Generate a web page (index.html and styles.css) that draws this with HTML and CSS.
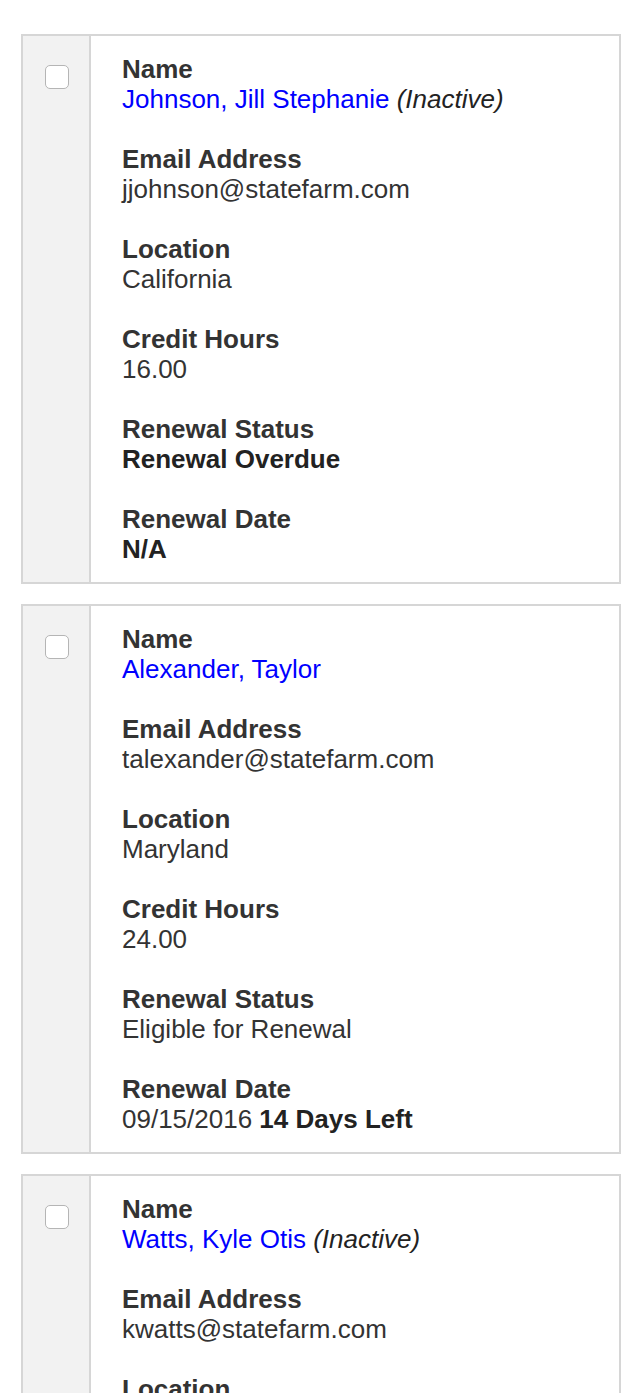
FILE: index.html
```html
<!DOCTYPE html>
<html>
<head>
<meta charset="utf-8">
<link rel="stylesheet" href="styles.css">
</head>
<body>
<div class="list">
  <div class="card">
    <div class="side"><span class="check"></span></div>
    <div class="fields">
      <div class="field"><div class="label">Name</div><div class="value"><a class="link">Johnson, Jill Stephanie</a> <em>(Inactive)</em></div></div>
      <div class="field"><div class="label">Email Address</div><div class="value">jjohnson@statefarm.com</div></div>
      <div class="field"><div class="label">Location</div><div class="value">California</div></div>
      <div class="field"><div class="label">Credit Hours</div><div class="value">16.00</div></div>
      <div class="field"><div class="label">Renewal Status</div><div class="value"><strong>Renewal Overdue</strong></div></div>
      <div class="field"><div class="label">Renewal Date</div><div class="value"><strong>N/A</strong></div></div>
    </div>
  </div>
  <div class="card">
    <div class="side"><span class="check"></span></div>
    <div class="fields">
      <div class="field"><div class="label">Name</div><div class="value"><a class="link">Alexander, Taylor</a></div></div>
      <div class="field"><div class="label">Email Address</div><div class="value">talexander@statefarm.com</div></div>
      <div class="field"><div class="label">Location</div><div class="value">Maryland</div></div>
      <div class="field"><div class="label">Credit Hours</div><div class="value">24.00</div></div>
      <div class="field"><div class="label">Renewal Status</div><div class="value">Eligible for Renewal</div></div>
      <div class="field"><div class="label">Renewal Date</div><div class="value">09/15/2016 <strong>14 Days Left</strong></div></div>
    </div>
  </div>
  <div class="card">
    <div class="side"><span class="check"></span></div>
    <div class="fields">
      <div class="field"><div class="label">Name</div><div class="value"><a class="link">Watts, Kyle Otis</a> <em>(Inactive)</em></div></div>
      <div class="field"><div class="label">Email Address</div><div class="value">kwatts@statefarm.com</div></div>
      <div class="field"><div class="label">Location</div><div class="value">Texas</div></div>
      <div class="field"><div class="label">Credit Hours</div><div class="value">8.00</div></div>
      <div class="field"><div class="label">Renewal Status</div><div class="value">Eligible for Renewal</div></div>
      <div class="field"><div class="label">Renewal Date</div><div class="value">10/01/2016</div></div>
    </div>
  </div>
</div>
</body>
</html>
```

FILE: styles.css
```css
html, body {
  margin: 0;
  padding: 0;
  background: #ffffff;
}
body {
  font-family: "Liberation Sans", Arial, Helvetica, sans-serif;
  font-size: 26px;
  line-height: 30px;
  color: #333333;
}
.list {
  display: flex;
  flex-direction: column;
  gap: 20px;
  padding: 34px 0 0 21px;
  width: 600px;
}
.card {
  display: flex;
  border: 2px solid #d6d6d6;
  background: #ffffff;
}
.side {
  width: 68px;
  flex: none;
  background: #f2f2f2;
  border-right: 2px solid #d6d6d6;
  display: flex;
  justify-content: flex-start;
  align-items: flex-start;
  padding: 29px 0 0 22px;
  box-sizing: border-box;
}
.check {
  display: block;
  width: 22px;
  height: 22px;
  border: 1px solid #b5b5b5;
  border-radius: 5px;
  background: #ffffff;
}
.fields {
  display: flex;
  flex-direction: column;
  gap: 30px;
  padding: 18px 20px 18px 31px;
}
.label {
  font-weight: bold;
  color: #333333;
}
.value {
  color: #333333;
}
.value strong {
  font-weight: bold;
  color: #222222;
}
.value em {
  font-style: italic;
  color: #222222;
}
.link {
  color: #0000ff;
  text-decoration: none;
}
```
